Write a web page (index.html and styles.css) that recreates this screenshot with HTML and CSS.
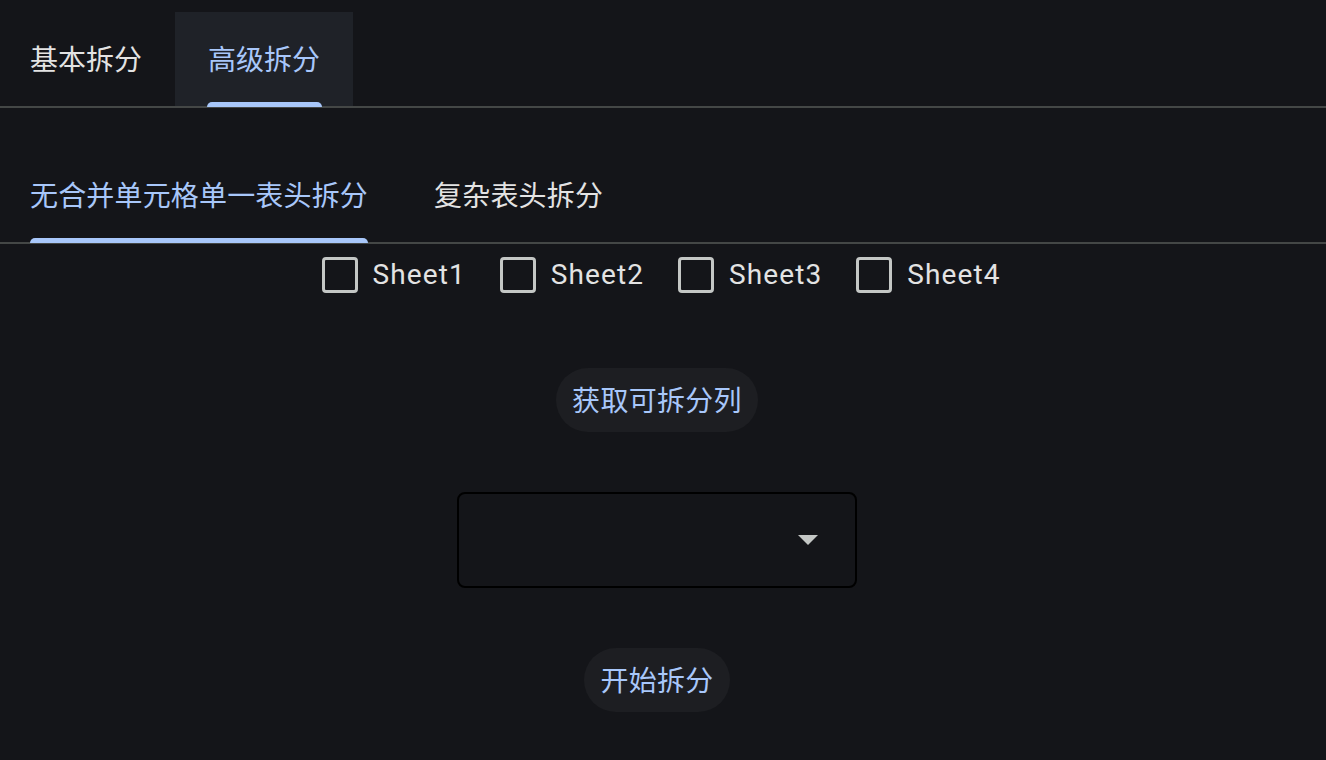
FILE: index.html
```html
<!DOCTYPE html>
<html lang="zh-CN">
<head>
    <meta charset="UTF-8">
    <meta name="viewport" content="width=device-width, initial-scale=1.0">
    <title>拆分</title>
    <link rel="stylesheet" href="styles.css">
</head>
<body>

    <!-- 顶部标签 -->
    <div class="tabs main-tabs">
        <div class="tab first">基本拆分</div>
        <div class="tab active shaded"><span class="tab-label">高级拆分</span></div>
    </div>

    <!-- 二级标签 -->
    <div class="tabs sub-tabs">
        <div class="tab first active"><span class="tab-label">无合并单元格单一表头拆分</span></div>
        <div class="tab">复杂表头拆分</div>
    </div>

    <div class="panel">
        <div class="sheet-list">
            <label class="sheet"><span class="box"></span>Sheet1</label>
            <label class="sheet"><span class="box"></span>Sheet2</label>
            <label class="sheet"><span class="box"></span>Sheet3</label>
            <label class="sheet"><span class="box"></span>Sheet4</label>
        </div>

        <button class="tonal-btn">获取可拆分列</button>

        <div class="select">
            <svg class="arrow" width="20" height="10" viewBox="0 0 20 10"><path d="M0 0h20L10 10z" fill="#c4c7c5"/></svg>
        </div>

        <button class="tonal-btn">开始拆分</button>
    </div>

</body>
</html>
```

FILE: styles.css
```css
body {
    margin: 0;
    padding: 0;
    background: #141519;
    color: #e3e3e3;
    font-family: 'Roboto', 'Noto Sans CJK SC', sans-serif;
}

.tabs {
    display: flex;
    height: 94px;
    border-bottom: 2px solid #444746;
}
.main-tabs {
    margin-top: 12px;
}
.sub-tabs {
    margin-top: 40px;
}

.tab {
    position: relative;
    display: flex;
    align-items: center;
    padding: 0 33px 2px 33px;
    font-size: 28px;
    color: #e3e3e3;
}
.tab.first {
    padding-left: 30px;
}
.sub-tabs .tab {
    letter-spacing: 0.17px;
}
.tab.shaded {
    background: #1f2228;
}
.tab.active {
    color: #a8c7fa;
}
.tab-label {
    position: relative;
    height: 100%;
    display: flex;
    align-items: center;
}
/* 选中指示条 */
.tab.active .tab-label::after {
    content: '';
    position: absolute;
    left: -1px;
    right: -2px;
    bottom: -3px;
    height: 5px;
    background: #a8c7fa;
    border-radius: 5px 5px 0 0;
}
.sub-tabs .tab.active .tab-label::after {
    left: 0;
    right: 0;
}

.panel {
    display: flex;
    flex-direction: column;
    align-items: center;
    width: 1314px;
}

.sheet-list {
    display: flex;
    gap: 34px;
    padding: 13px 0 0 8px;
    height: 49px;
}
.sheet {
    display: flex;
    align-items: flex-start;
    gap: 15px;
    font-size: 28px;
    letter-spacing: 1.1px;
    line-height: 36px;
    color: #e3e3e3;
}
.box {
    width: 30px;
    height: 30px;
    border: 3px solid #c4c7c5;
    border-radius: 4px;
}

.tonal-btn {
    margin-top: 62px;
    height: 64px;
    padding: 0 16px 2px 16px;
    border: none;
    border-radius: 32px;
    background: #1d1e22;
    color: #a8c7fa;
    font-family: 'Noto Sans CJK SC', sans-serif;
    font-size: 28px;
    letter-spacing: 0.3px;
}

.select {
    position: relative;
    box-sizing: border-box;
    margin-top: 60px;
    width: 400px;
    height: 96px;
    border: 2px solid #000;
    border-radius: 8px;
}
.select .arrow {
    position: absolute;
    right: 37px;
    top: 41px;
}

.select + .tonal-btn {
    margin-top: 60px;
}
```
